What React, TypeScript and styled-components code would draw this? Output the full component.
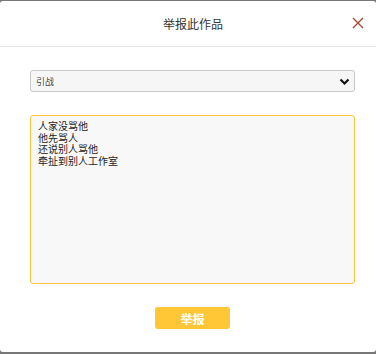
import React, { useState } from 'react'
import styled, { createGlobalStyle } from 'styled-components'

/*---> Global <---*/
const GlobalStyle = createGlobalStyle`
  html, body {
    margin: 0;
    padding: 0;
    background: #777777;
  }
  body {
    font-family: 'Noto Sans CJK SC', 'Noto Sans', sans-serif;
  }
`

const reasons = ['引战', '色情', '暴力', '抄袭', '其他']

/*---> Component <---*/
export default function App() {
  const [reason, setReason] = useState(reasons[0])
  const [text, setText] = useState(
    '人家没骂他\n他先骂人\n还说别人骂他\n牵扯到别人工作室'
  )

  return (
    <>
      <GlobalStyle />
      <Modal>
        <Header>
          <Title>举报此作品</Title>
          <CloseButton aria-label="close">
            <svg width="12" height="12" viewBox="0 0 12 12">
              <path
                d="M1 1 L11 11 M11 1 L1 11"
                stroke="#a3462f"
                strokeWidth="1.3"
                fill="none"
              />
            </svg>
          </CloseButton>
        </Header>
        <Body>
          <SelectWrap>
            <Select value={reason} onChange={e => setReason(e.target.value)}>
              {reasons.map(r => (
                <option key={r} value={r}>
                  {r}
                </option>
              ))}
            </Select>
            <Chevron width="11" height="8" viewBox="0 0 11 8">
              <path
                d="M1.5 1.5 L5.5 5.5 L9.5 1.5"
                stroke="#111"
                strokeWidth="2.2"
                fill="none"
              />
            </Chevron>
          </SelectWrap>
          <TextArea value={text} onChange={e => setText(e.target.value)} />
          <Footer>
            <SubmitButton>举报</SubmitButton>
          </Footer>
        </Body>
      </Modal>
    </>
  )
}

/*---> Styles <---*/
const Modal = styled.div`
  margin-top: 1px;
  height: 351px;
  background: #ffffff;
  border-radius: 3px;
  box-sizing: border-box;
  display: flex;
  flex-direction: column;
`

const Header = styled.div`
  height: 45px;
  border-bottom: 1px solid #e8e8e8;
  display: flex;
  align-items: center;
  justify-content: center;
  position: relative;
`

const Title = styled.span`
  font-size: 12px;
  color: #333333;
  margin-left: 10px;
`

const CloseButton = styled.button`
  position: absolute;
  right: 12px;
  top: 16px;
  width: 12px;
  height: 12px;
  padding: 0;
  border: none;
  background: transparent;
  cursor: pointer;
  display: flex;
`

const Body = styled.div`
  padding: 23px 21px 0 30px;
  display: flex;
  flex-direction: column;
`

const SelectWrap = styled.div`
  position: relative;
  height: 22px;
`

const Select = styled.select`
  appearance: none;
  display: block;
  width: 100%;
  height: 22px;
  box-sizing: border-box;
  border: 1px solid #c8c8c8;
  border-radius: 3px;
  background: #f6f6f6;
  padding: 0 0 0 5px;
  font-family: 'Noto Sans CJK SC', sans-serif;
  font-size: 9px;
  color: #444444;
  outline: none;
`

const Chevron = styled.svg`
  position: absolute;
  right: 5px;
  top: 8px;
  pointer-events: none;
`

const TextArea = styled.textarea`
  margin-top: 23px;
  height: 169px;
  box-sizing: border-box;
  border: 1px solid #ffc53a;
  border-radius: 3px;
  background: #f8f8f8;
  padding: 4px 7px;
  font-family: 'Noto Sans CJK SC', sans-serif;
  font-size: 10px;
  line-height: 11.5px;
  color: #222222;
  resize: none;
  outline: none;
`

const Footer = styled.div`
  display: flex;
  justify-content: center;
  padding-top: 23px;
`

const SubmitButton = styled.button`
  width: 75px;
  height: 22px;
  border: none;
  border-radius: 3px;
  background: #ffc636;
  color: #ffffff;
  font-family: 'Noto Sans CJK SC', sans-serif;
  font-size: 12px;
  font-weight: bold;
  cursor: pointer;
  padding: 0;
`
